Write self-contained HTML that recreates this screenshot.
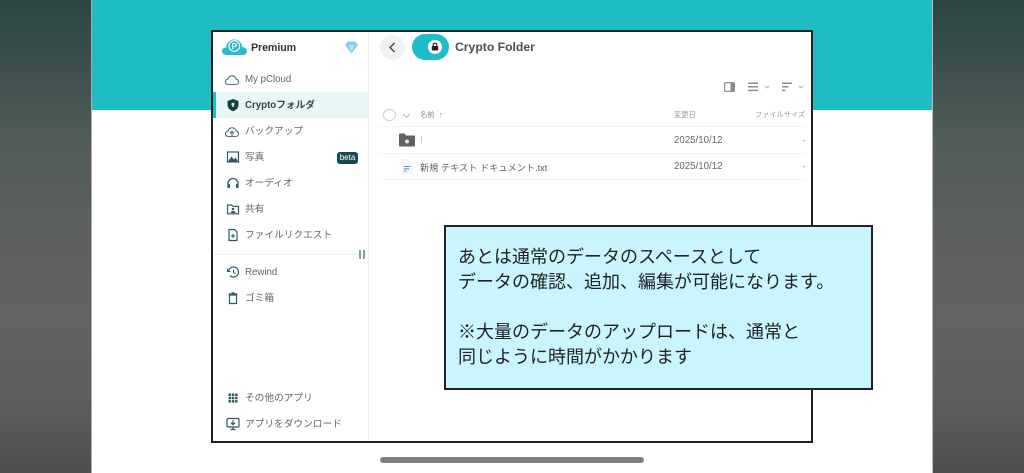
<!DOCTYPE html>
<html lang="ja"><head><meta charset="utf-8"><title>Crypto Folder</title>
<style>
*{box-sizing:border-box;margin:0;padding:0}
html,body{width:1024px;height:473px;overflow:hidden;background:#555}
body{position:relative;font-family:"Liberation Sans","Noto Sans CJK JP",sans-serif;color:#555}
#w{position:absolute;left:0;top:0;width:1024px;height:473px;filter:blur(.35px)}
.abs,.t,.i{position:absolute}
.side{position:absolute;top:0;width:92px;height:473px;background:linear-gradient(180deg,#2b4644 0,#3f504e 70px,#505c59 140px,#5c605e 220px,#636362 320px,#5e5e5e 400px,#4e4e4e 473px)}
.t{white-space:nowrap;line-height:14px}
.m{left:245px;font-size:9.7px;color:#5f6668}
.i{left:225px;width:14px;height:14px}
svg{display:block;overflow:visible}
.r{position:absolute;height:1px;background:#f2f3f3;left:380px;width:425px}
.d{font-size:9.7px;color:#666;left:674px}
</style></head><body><div id="w">
<div class="side" style="left:0"></div>
<div class="side" style="left:933px"></div>
<div class="abs" style="left:92px;top:0;width:841px;height:473px;background:#fff"></div>
<div class="abs" style="left:91px;top:0;width:1px;height:473px;background:#aaa"></div>
<div class="abs" style="left:932px;top:0;width:1px;height:473px;background:#bbb"></div>
<div class="abs" style="left:92px;top:0;width:840px;height:110px;background:#20bcc4"></div>

<div class="abs" style="left:211px;top:30px;width:602px;height:413px;background:#fff;border:2px solid #222"></div>
<div class="abs" style="left:368px;top:32px;width:1px;height:409px;background:#f0f1f1"></div>
<div class="abs" style="left:213px;top:92px;width:155px;height:26px;background:#e9f6f8"></div>
<div class="abs" style="left:213px;top:92px;width:3px;height:26px;background:#20bcc4"></div>
<div class="abs" style="left:213px;top:254px;width:155px;height:1px;background:#eff1f1"></div>

<!-- logo -->
<svg class="abs" style="left:222px;top:38px" width="25" height="18" viewBox="0 0 25 18"><path d="M4.500 17C2 17 0 15.200 0 13 0 10.800 2 9.200 4.200 9.500 4.600 4.500 8 1.500 12.300 1.500 16.800 1.500 20 4.800 20.300 9.300 23 9.200 25 11 25 13.200 25 15.400 23.200 17 20.800 17Z" fill="#27bcc9"/><circle cx="12.300" cy="8" r="5.300" fill="none" stroke="#fff" stroke-width="1.200"/><text x="12.300" y="11" font-size="8.500" font-weight="700" text-anchor="middle" fill="#fff" font-family="Liberation Sans">P</text></svg>
<div class="t" style="left:251px;top:41px;font-size:10.700px;font-weight:700;color:#333;letter-spacing:-.1px">Premium</div>
<svg class="abs" style="left:345px;top:41px" width="13" height="13" viewBox="0 0 13 13"><path d="M3 .5H10L13 4 6.500 12.500 0 4Z" fill="#7fcdf0"/><path d="M3.500 4H9.500L6.500 11Z" fill="#b5e5f8"/></svg>

<!-- nav -->
<svg class="i" style="top:73px" viewBox="0 0 14 14"><path d="M3.500 11.500C1.500 11.500.5 10.200.5 8.800.5 7.300 1.700 6.200 3 6.100 3.500 4 5.200 2.800 7.200 2.800 9.400 2.800 11 4.300 11.200 6.200 12.600 6.500 13.500 7.500 13.500 8.900 13.500 10.400 12.300 11.500 10.800 11.500Z" fill="none" stroke="#4f7078" stroke-width="1.100"/></svg>
<div class="t m" style="top:72.500px">My pCloud</div>
<svg class="i" style="top:98px;left:226px" viewBox="0 0 14 14"><path d="M7 1 12.500 3V7C12.500 10 10 12.300 7 13.200 4 12.300 1.500 10 1.500 7V3Z" fill="#173f48"/><circle cx="7" cy="6.200" r="1.500" fill="#e9f6f8"/><path d="M6.300 6.500H7.700V9H6.300Z" fill="#e9f6f8"/></svg>
<div class="t m" style="top:98.500px;font-weight:700;color:#3b4547">Cryptoフォルダ</div>
<svg class="i" style="top:125px" viewBox="0 0 14 14"><path d="M3.500 11.500C1.500 11.500.5 10.200.5 8.800.5 7.300 1.700 6.200 3 6.100 3.500 4 5.200 2.800 7.200 2.800 9.400 2.800 11 4.300 11.200 6.200 12.600 6.500 13.500 7.500 13.500 8.900 13.500 10.400 12.300 11.500 10.800 11.500Z" fill="none" stroke="#4f7078" stroke-width="1.100"/><path d="M7 11V6.500M5 8.300 7 6.300 9 8.300" fill="none" stroke="#4f7078" stroke-width="1.200"/></svg>
<div class="t m" style="top:124.500px">バックアップ</div>
<svg class="i" style="top:150px;left:226px" viewBox="0 0 14 14"><rect x="1.500" y="2" width="11" height="10" fill="none" stroke="#2e5a64" stroke-width="1.200"/><path d="M2 11.500 5.500 6.500 8 9.500 9.800 7.500 12 11.500Z" fill="#2e5a64"/></svg>
<div class="t m" style="top:150.500px">写真</div>
<div class="abs" style="left:337px;top:151.500px;width:21px;height:12px;background:#174a52;border-radius:3px;color:#fff;font-size:8px;line-height:12px;text-align:center">beta</div>
<svg class="i" style="top:176px;left:226px" viewBox="0 0 14 14"><path d="M2 11V7.500C2 4.500 4.200 2.500 7 2.500 9.800 2.500 12 4.500 12 7.500V11" fill="none" stroke="#2e5a64" stroke-width="1.300"/><rect x="1.500" y="8" width="2.500" height="4" rx=".8" fill="#2e5a64"/><rect x="10" y="8" width="2.500" height="4" rx=".8" fill="#2e5a64"/></svg>
<div class="t m" style="top:176.500px">オーディオ</div>
<svg class="i" style="top:202px;left:226px" viewBox="0 0 14 14"><path d="M1.500 3H5.500L6.800 4.300H12.500V11.800H1.500Z" fill="none" stroke="#2e5a64" stroke-width="1.200"/><circle cx="7" cy="7" r="1.300" fill="#2e5a64"/><path d="M4.500 11C4.500 9.500 5.500 9 7 9 8.500 9 9.500 9.500 9.500 11Z" fill="#2e5a64"/></svg>
<div class="t m" style="top:202.500px">共有</div>
<svg class="i" style="top:228px;left:226px" viewBox="0 0 14 14"><path d="M3 1.500H8.500L11 4V12.500H3Z" fill="none" stroke="#2e5a64" stroke-width="1.200"/><path d="M7 5.800V10M5 7.900H9" stroke="#2e5a64" stroke-width="1.100"/></svg>
<div class="t m" style="top:228.500px">ファイルリクエスト</div>
<div class="abs" style="left:359px;top:250px;width:2px;height:9px;background:#7f9ea5"></div>
<div class="abs" style="left:362.500px;top:250px;width:2px;height:9px;background:#7f9ea5"></div>
<svg class="i" style="top:265px;left:226px" viewBox="0 0 14 14"><path d="M2.500 7A5 5 0 1 1 4 10.600" fill="none" stroke="#2e5a64" stroke-width="1.200"/><path d="M1.500 3.500V6.500H4.500" fill="none" stroke="#2e5a64" stroke-width="1.100"/><path d="M7.500 4.500V7.500L9.500 8.700" fill="none" stroke="#2e5a64" stroke-width="1"/></svg>
<div class="t m" style="top:265.500px">Rewind</div>
<svg class="i" style="top:291px;left:226px" viewBox="0 0 14 14"><path d="M3.500 4H10.500V12.500H3.500Z" fill="none" stroke="#2e5a64" stroke-width="1.200" stroke-linejoin="round"/><path d="M2.500 3H11.500M5.500 1.800H8.500" stroke="#2e5a64" stroke-width="1.200"/></svg>
<div class="t m" style="top:291.500px">ゴミ箱</div>
<svg class="i" style="top:391px;left:226px" viewBox="0 0 14 14" fill="#2e5a64"><rect x="2.500" y="2.500" width="2.500" height="2.500"/><rect x="5.800" y="2.500" width="2.500" height="2.500"/><rect x="9.100" y="2.500" width="2.500" height="2.500"/><rect x="2.500" y="5.800" width="2.500" height="2.500"/><rect x="5.800" y="5.800" width="2.500" height="2.500"/><rect x="9.100" y="5.800" width="2.500" height="2.500"/><rect x="2.500" y="9.100" width="2.500" height="2.500"/><rect x="5.800" y="9.100" width="2.500" height="2.500"/><rect x="9.100" y="9.100" width="2.500" height="2.500"/></svg>
<div class="t m" style="top:391.500px">その他のアプリ</div>
<svg class="i" style="top:417px;left:226px" viewBox="0 0 14 14"><rect x="1" y="1.500" width="12" height="8.500" rx="1" fill="none" stroke="#2e5a64" stroke-width="1.200"/><path d="M4.500 12.500H9.500M7 10V12.500" stroke="#2e5a64" stroke-width="1.200"/><path d="M7 3V7.500M5 5.700 7 7.700 9 5.700" fill="none" stroke="#2e5a64" stroke-width="1.200"/></svg>
<div class="t m" style="top:417.500px">アプリをダウンロード</div>

<!-- header -->
<div class="abs" style="left:380px;top:35px;width:25px;height:25px;border-radius:50%;background:#f0f2f3"></div>
<svg class="abs" style="left:388px;top:42px" width="8" height="11" viewBox="0 0 8 11"><path d="M6.500 1 2 5.500 6.500 10" fill="none" stroke="#444" stroke-width="1.400"/></svg>
<div class="abs" style="left:412px;top:34px;width:37px;height:26px;border-radius:13px;background:#20bcc9"></div>
<div class="abs" style="left:428px;top:40px;width:14px;height:14px;border-radius:50%;background:#fff"></div>
<svg class="abs" style="left:431px;top:42px" width="8" height="9" viewBox="0 0 8 9"><path d="M2.200 4V2.800C2.200 .6 5.800 .6 5.800 2.800V4" fill="none" stroke="#222" stroke-width="1.100"/><rect x=".8" y="4" width="6.400" height="4.500" rx=".5" fill="#222"/></svg>
<div class="t" style="left:455px;top:40px;font-size:12.200px;font-weight:700;color:#4a4f52">Crypto Folder</div>

<!-- toolbar -->
<svg class="abs" style="left:724px;top:82px" width="11" height="10" viewBox="0 0 11 10"><rect x=".6" y=".6" width="9.800" height="8.800" rx="1" fill="none" stroke="#8a8f92" stroke-width="1.200"/><rect x="6.500" y="1" width="3.500" height="8" fill="#8a8f92"/></svg>
<svg class="abs" style="left:747.500px;top:82px" width="10" height="10" viewBox="0 0 10 10"><path d="M0 1.200H10M0 4.800H10M0 8.400H10" stroke="#8a8f92" stroke-width="1.500"/></svg>
<svg class="abs" style="left:764px;top:85px" width="6" height="4" viewBox="0 0 6 4"><path d="M1 1 3 3 5 1" fill="none" stroke="#aaa" stroke-width=".9"/></svg>
<svg class="abs" style="left:781.500px;top:82px" width="10" height="10" viewBox="0 0 10 10"><path d="M0 1.200H10M0 4.800H6.500M0 8.400H3.500" stroke="#8a8f92" stroke-width="1.500"/></svg>
<svg class="abs" style="left:798px;top:85px" width="6" height="4" viewBox="0 0 6 4"><path d="M1 1 3 3 5 1" fill="none" stroke="#aaa" stroke-width=".9"/></svg>

<!-- table -->
<div class="abs" style="left:383px;top:108.500px;width:12.500px;height:12.500px;border-radius:50%;border:1px solid #cfd2d3"></div>
<svg class="abs" style="left:402px;top:113px" width="9" height="6" viewBox="0 0 9 6"><path d="M1 1 4.500 4.500 8 1" fill="none" stroke="#b5b9ba" stroke-width="1"/></svg>
<div class="t" style="left:420px;top:108px;font-size:7.300px;color:#8a8e90">名前</div>
<div class="t" style="left:439px;top:108px;font-size:7.500px;color:#8a8e90">↑</div>
<div class="t" style="left:674px;top:108px;font-size:7.300px;color:#999">変更日</div>
<div class="t" style="left:755px;top:108px;font-size:7.200px;color:#999">ファイルサイズ</div>
<div class="r" style="top:126px"></div>
<div class="r" style="top:152.500px"></div>
<div class="r" style="top:178.500px"></div>
<svg class="abs" style="left:399px;top:133px" width="16" height="14" viewBox="0 0 16 14"><path d="M0 1.500C0 1 .3.500 1 .5H5.500L7 2.500H15C15.600 2.500 16 3 16 3.500V12.500C16 13.200 15.600 13.500 15 13.500H1C.4 13.500 0 13.200 0 12.500Z" fill="#5f6366"/><circle cx="8" cy="8.500" r="2" fill="#e6e7e8"/></svg>
<div class="abs" style="left:421px;top:136px;width:1px;height:7px;background:#ccc"></div>
<div class="t d" style="top:133.500px">2025/10/12</div>
<div class="t" style="left:803px;top:133.500px;font-size:8px;color:#777">-</div>
<svg class="abs" style="left:401px;top:158px" width="12" height="17" viewBox="0 0 12 17"><path d="M1 .5H8L11.500 4V16.500H1Z" fill="#f4f6f8"/><path d="M2.800 8.500H9.500M2.800 10.800H8M2.800 13H5.500" stroke="#3f9fe0" stroke-width="1.100"/></svg>
<div class="t" style="left:420px;top:160.500px;font-size:9.200px;color:#5c6062">新規 テキスト ドキュメント.txt</div>
<div class="t d" style="top:159.500px">2025/10/12</div>
<div class="t" style="left:803px;top:159.500px;font-size:8px;color:#777">-</div>

<!-- callout -->
<div class="abs" style="left:444px;top:225px;width:429px;height:165px;background:#c9f5fe;border:2px solid #222"></div>
<div class="t" style="left:458px;top:244.500px;font-size:18px;line-height:25px;color:#222;height:auto">あとは通常のデータのスペースとして<br>データの確認、追加、編集が可能になります。<br><br>※大量のデータのアップロードは、通常と<br>同じように時間がかかります</div>

<div class="abs" style="left:380px;top:457px;width:264px;height:6px;border-radius:3px;background:#808080"></div>
</div></body></html>
